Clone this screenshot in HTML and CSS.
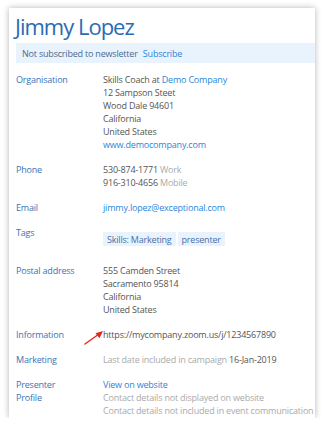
FILE: index.html
```html
<!DOCTYPE html>
<html lang="en">
<head>
	<meta charset="utf-8">
	<meta name="viewport" content="width=device-width, initial-scale=1.0">
	<link rel="stylesheet" href="styles.css">
</head>
<body>
	<div class="card">
		<h1 class="name">Jimmy Lopez</h1>
		<div class="newsletter">
			Not subscribed to newsletter <a href="#">Subscribe</a>
		</div>

		<div class="details">
			<div class="label">Organisation</div>
			<div class="value">
				Skills Coach at <a href="#">Demo Company</a><br>
				12 Sampson Steet<br>
				Wood Dale 94601<br>
				California<br>
				United States<br>
				<a href="#">www.democompany.com</a>
			</div>

			<div class="label">Phone</div>
			<div class="value">
				530-874-1771 <span class="muted">Work</span><br>
				916-310-4656 <span class="muted">Mobile</span>
			</div>

			<div class="label">Email</div>
			<div class="value"><a href="#">jimmy.lopez@exceptional.com</a></div>

			<div class="label">Tags</div>
			<div class="value tags">
				<span class="tag">Skills: Marketing</span><span class="tag">presenter</span>
			</div>

			<div class="label">Postal address</div>
			<div class="value">
				555 Camden Street<br>
				Sacramento 95814<br>
				California<br>
				United States
			</div>

			<div class="label">Information</div>
			<div class="value info">
				<svg class="arrow" width="22" height="16" viewBox="0 0 22 16">
					<line x1="2" y1="14" x2="16" y2="4" stroke="#e8261c" stroke-width="1.4" stroke-linecap="round"/>
					<polygon points="20,1 12.5,3.2 16.5,8.2" fill="#e8261c"/>
				</svg>
				https://mycompany.zoom.us/j/1234567890
			</div>

			<div class="label">Marketing</div>
			<div class="value"><span class="muted">Last date included in campaign</span> 16-Jan-2019</div>

			<div class="label">Presenter<br>Profile</div>
			<div class="value">
				<a href="#">View on website</a><br>
				<span class="muted">Contact details not displayed on website</span><br>
				<span class="muted">Contact details not included in event communication</span>
			</div>
		</div>
	</div>
</body>
</html>
```

FILE: styles.css
```css
body {
	margin: 0;
	background: #fff;
	font-family: "Open Sans", "Noto Sans", sans-serif;
	font-size: 9px;
	letter-spacing: -0.2px;
	line-height: 13px;
	color: #555;
}
a {
	color: #2b86d9;
	text-decoration: none;
}
.card {
	margin: 8px 9px 0 9px;
	height: 410px;
	background: #fff;
	box-shadow: 0 0 6px rgba(0, 0, 0, 0.3);
	padding-left: 6px;
	overflow: hidden;
}
.name {
	margin: 0;
	padding-top: 3px;
	font-size: 22px;
	letter-spacing: -1px;
	line-height: 30px;
	font-weight: normal;
	color: #2a6bb5;
}
.newsletter {
	margin: 2px 0 0 1px;
	padding: 4px 6px 3px;
	background: #e9f3fe;
	color: #4c6a8c;
}
.newsletter a {
	margin-left: 3px;
}
.details {
	display: grid;
	grid-template-columns: 87px 1fr;
	row-gap: 12px;
	padding: 10px 0 0 1px;
}
.label {
	color: #3b73b6;
}
.muted {
	color: #aaa;
}
.tags {
	display: flex;
	align-items: flex-start;
	gap: 2px;
	padding: 6px 0 6px;
}
.tag {
	background: #e9f3fe;
	color: #4a6fa5;
	padding: 1px 4px 0;
}
.info {
	position: relative;
}
.arrow {
	position: absolute;
	left: -20px;
	top: 2px;
}
```
